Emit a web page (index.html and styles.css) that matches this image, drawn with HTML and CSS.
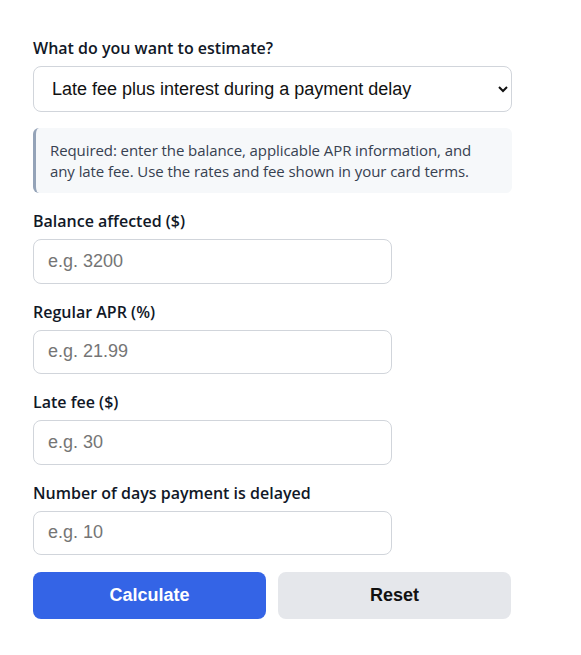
FILE: index.html
```html
<!DOCTYPE html>
<html>

<head>
    <title>Late Fee Estimator</title>
    <link rel="stylesheet" href="styles.css">
</head>

<body>

    <div class="calculator">
        <div class="field field-mode">
            <label for="mode">What do you want to estimate?</label>
            <select id="mode" class="mode-select">
                <option>Late fee plus interest during a payment delay</option>
                <option>Interest only on a carried balance</option>
                <option>Late fee only</option>
            </select>
        </div>

        <div class="notice">
            Required: enter the balance, applicable APR information, and
            any late fee. Use the rates and fee shown in your card terms.
        </div>

        <div class="field">
            <label for="balance">Balance affected ($)</label>
            <input id="balance" type="number" placeholder="e.g. 3200">
        </div>
        <div class="field">
            <label for="apr">Regular APR (%)</label>
            <input id="apr" type="number" placeholder="e.g. 21.99">
        </div>
        <div class="field">
            <label for="fee">Late fee ($)</label>
            <input id="fee" type="number" placeholder="e.g. 30">
        </div>
        <div class="field">
            <label for="days">Number of days payment is delayed</label>
            <input id="days" type="number" placeholder="e.g. 10">
        </div>

        <div class="actions">
            <button id="calculate" class="btn btn-primary">Calculate</button>
            <button id="reset" class="btn btn-secondary">Reset</button>
        </div>
    </div>

</body>
</html>
```

FILE: styles.css
```css
body {
    margin: 0;
    font-family: "Open Sans", "Noto Sans", sans-serif;
    background: #fff;
    color: #111827;
}
.calculator {
    width: 479px;
    padding: 36px 33px;
}
.field {
    margin-bottom: 16px;
}
.field-mode {
    margin-bottom: 16px;
}
label {
    display: block;
    font-size: 16px;
    font-weight: 600;
    line-height: 24px;
    margin-bottom: 6px;
}
select,
input {
    font-family: "Liberation Sans", Arial, sans-serif;
    font-size: 18px;
    color: #111;
    background: #fff;
    border: 1px solid #d1d5db;
    border-radius: 8px;
    box-sizing: border-box;
}
.mode-select {
    width: 100%;
    height: 46px;
    padding: 0 14px 0 14px;
}
input {
    width: 359px;
    height: 44.5px;
    padding: 0 14px;
}
input::placeholder {
    color: #757575;
}
.notice {
    background: #f6f8fa;
    border-left: 3px solid #94a3b8;
    border-radius: 6px;
    padding: 12px 14px 11px;
    font-size: 15px;
    letter-spacing: -0.08px;
    line-height: 21px;
    color: #374151;
    margin-bottom: 16px;
}
.actions {
    display: flex;
    gap: 12px;
    width: 478px;
    margin-top: 17px;
}
.btn {
    flex: 1;
    height: 47px;
    border: none;
    border-radius: 8px;
    font-family: "Liberation Sans", Arial, sans-serif;
    font-size: 18px;
    font-weight: bold;
    cursor: pointer;
}
.btn-primary {
    background-color: #3464e6;
    color: #fff;
}
.btn-secondary {
    background-color: #e5e7eb;
    color: #111;
}
```
